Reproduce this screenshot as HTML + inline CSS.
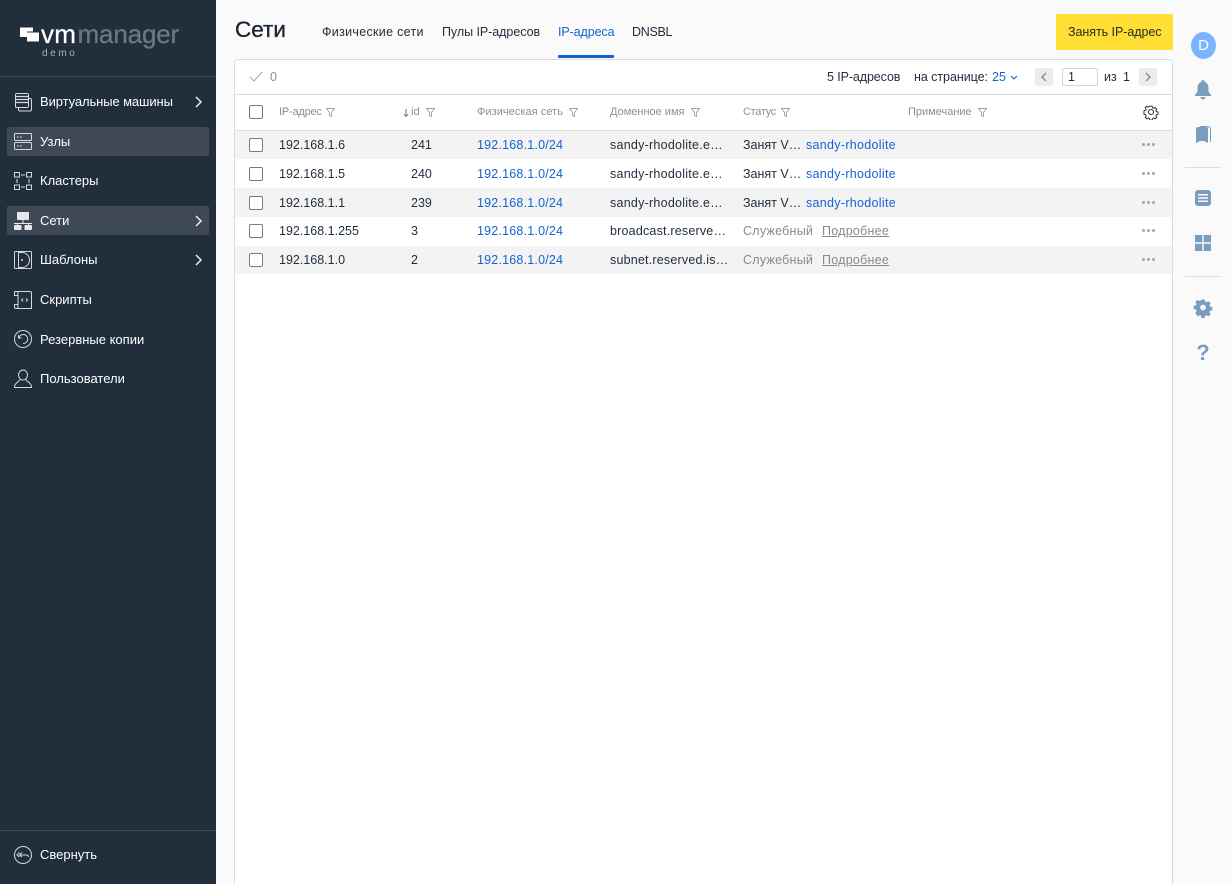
<!DOCTYPE html>
<html lang="ru"><head><meta charset="utf-8"><title>Сети</title>
<style>
*{box-sizing:border-box}
html,body{margin:0;padding:0;width:1232px;height:884px;overflow:hidden;background:#fafafa;font-family:"Liberation Sans",sans-serif;font-size:12.5px;color:#1f2d3d}
#wrap{position:absolute;left:0;top:0;width:1232px;height:884px;overflow:hidden}
.a,.t{position:absolute;white-space:nowrap}
.t{line-height:16px;height:16px}
.s{letter-spacing:.2px}
#side{position:absolute;left:0;top:0;width:216px;height:884px;background:#212e3c}
.hl{position:absolute;left:7px;width:202px;height:29px;background:#3e4955;border-radius:2px}
.m{position:absolute;left:40px;color:#fff;font-size:13px;line-height:16px;white-space:nowrap}
.ic{position:absolute;left:13px;width:20px;height:20px;fill:none;stroke:#d5d8dc;stroke-width:1}
.ch{position:absolute;left:194px;width:9px;height:14px;fill:none;stroke:#e8eaec;stroke-width:1.5}
.b{position:absolute;left:235px;width:937px;height:1px;background:#dcdcdc}
.row{position:absolute;left:235px;width:937px;height:29px}
.g{background:#f3f3f3}
.cb{position:absolute;left:249px;width:14px;height:14px;border:1px solid #7b7b7b;border-radius:2px;background:#fff}
.h{color:#8a8f95;font-size:11px}
.l{color:#1563d3}
.f{position:absolute;width:9px;height:9px;fill:none;stroke:#9aa0a6;stroke-width:.9}
.d{position:absolute;left:1142px;width:14px;height:3px}
.d i{position:absolute;top:0;width:3px;height:3px;background:#a6a6a6;border-radius:50%}
.r{position:absolute;left:1193px;width:20px;height:20px;fill:#7b9dbd}
</style></head><body><div id="wrap">
<div id="side">
<svg class="a" style="left:19px;top:26px" width="22" height="17"><path d="M1 1.500h13v4H8v5.500H1z" fill="#fff"/><rect x="8" y="6.500" width="12" height="9" fill="#fff"/></svg>
<div class="a" style="left:41px;top:19px;font-size:26px;line-height:30px;color:#fff;-webkit-text-stroke:.3px #fff;letter-spacing:.2px">vm</div>
<div class="a" style="left:77.500px;top:19px;font-size:26px;line-height:30px;color:#6e7781;-webkit-text-stroke:.3px #6e7781;letter-spacing:-.15px">manager</div>
<div class="a" style="left:42px;top:47px;font-size:10px;line-height:13px;color:#a9aeb4;letter-spacing:2.6px">demo</div>
<div class="a" style="left:0;top:76px;width:216px;height:1px;background:#3e4955"></div>
<div class="hl" style="top:127px"></div><div class="hl" style="top:206px"></div>

<svg class="ic" style="top:92px" viewBox="0 0 20 20"><path d="M2.500 15.500V3A1.500 1.500 0 0 1 4 1.500h10A1.500 1.500 0 0 1 15.500 3v11a1.500 1.500 0 0 1-1.500 1.500H3.500a1 1 0 0 1-1-1"/><path d="M2.500 4.500h13M2.500 7.500h13M2.500 10.500h13" stroke-width="1.300"/><path d="M15.500 6.500H17A1.500 1.500 0 0 1 18.500 8v9.500A1.500 1.500 0 0 1 17 19H7a1.500 1.500 0 0 1-1.500-1.500v-2"/></svg>
<div class="m" style="top:94px;letter-spacing:-.1px">Виртуальные машины</div>
<svg class="ch" style="top:95px" viewBox="0 0 9 14"><path d="M2 2l5 5-5 5"/></svg>

<svg class="ic" style="top:132px" viewBox="0 0 20 20"><rect x="1.500" y="1.500" width="17" height="7" rx="1"/><rect x="1.500" y="10.500" width="17" height="7" rx="1"/><path d="M4 5h1.500M7 5h1.500M4 14h1.500M7 14h1.500" stroke-width="1.200"/></svg>
<div class="m" style="top:134px">Узлы</div>

<svg class="ic" style="top:171px" viewBox="0 0 20 20"><rect x="1.500" y="1.500" width="5" height="4.500"/><rect x="13.500" y="1.500" width="5" height="4.500"/><rect x="1.500" y="14" width="5" height="4.500"/><rect x="13.500" y="14" width="5" height="4.500"/><path d="M8 4h4M8 16h4M4 8v4M16 8v4"/></svg>
<div class="m" style="top:173px">Кластеры</div>

<svg class="ic" style="top:211px" viewBox="0 0 20 20"><rect x="4" y="1" width="12" height="8" rx="1" fill="#e6e8ea" stroke="none"/><rect x="1" y="14" width="7.500" height="5" rx="1" fill="#e6e8ea" stroke="none"/><rect x="11.500" y="14" width="7.500" height="5" rx="1" fill="#e6e8ea" stroke="none"/><path d="M10 9v3M1 12.500h18M4.500 12.500V14M15.500 12.500V14" stroke="#e6e8ea"/></svg>
<div class="m" style="top:213px">Сети</div>
<svg class="ch" style="top:214px" viewBox="0 0 9 14"><path d="M2 2l5 5-5 5"/></svg>

<svg class="ic" style="top:250px" viewBox="0 0 20 20"><rect x="1.500" y="1.500" width="17" height="17" rx="1"/><path d="M5.500 1.500v17M5.500 2.500h3.500a7.500 7.500 0 0 1 0 15H5.500"/><circle cx="9" cy="10" r="1" fill="#d5d8dc" stroke="none"/></svg>
<div class="m" style="top:252px">Шаблоны</div>
<svg class="ch" style="top:253px" viewBox="0 0 9 14"><path d="M2 2l5 5-5 5"/></svg>

<svg class="ic" style="top:290px" viewBox="0 0 20 20"><path d="M1.500 1.500H17A1.500 1.500 0 0 1 18.500 3v15.500H5V5.500M1.500 1.500v4H5M1.500 1.500h2A1.500 1.500 0 0 1 5 3v2.500M5 14.500H1.500V17A1.500 1.500 0 0 0 3 18.500h2"/><path d="M10 8.500L8.500 10l1.500 1.500M13 8.500l1.500 1.500-1.500 1.500"/></svg>
<div class="m" style="top:292px">Скрипты</div>

<svg class="ic" style="top:329px" viewBox="0 0 20 20"><circle cx="10" cy="10" r="8.500"/><path d="M6 8.500A4.500 4.500 0 1 1 10 14.500M5.500 6v3h3"/></svg>
<div class="m" style="top:332px">Резервные копии</div>

<svg class="ic" style="top:369px" viewBox="0 0 20 20"><ellipse cx="10" cy="6" rx="4.500" ry="5"/><path d="M7 10.500c0 2-5.500 3-5.500 7.500v.5h17V18c0-4.500-5.500-5.500-5.500-7.500"/></svg>
<div class="m" style="top:371px">Пользователи</div>

<div class="a" style="left:0;top:830px;width:216px;height:1px;background:#3e4955"></div>
<svg class="ic" style="top:845px" viewBox="0 0 20 20"><circle cx="10" cy="10" r="8.500"/><path d="M6.500 7.500L4 10l2.500 2M9 7.500L6.500 10 9 12M7 10h6c1.500 0 2.500 .8 2.500 2"/></svg>
<div class="m" style="top:847px">Свернуть</div>
</div>

<div class="t" style="left:235px;top:17px;font-size:22.500px;line-height:26px;height:26px;color:#1b2632;-webkit-text-stroke:.35px #1b2632">Сети</div>
<div class="t" style="left:322px;top:24px;letter-spacing:.3px">Физические сети</div>
<div class="t" style="left:442px;top:24px;letter-spacing:-.05px">Пулы IP-адресов</div>
<div class="t l" style="left:558px;top:24px;letter-spacing:-.1px">IP-адреса</div>
<div class="t" style="left:632px;top:24px;letter-spacing:-.3px">DNSBL</div>
<div class="a" style="left:558px;top:55px;width:56px;height:3px;background:#0f62d0;border-radius:1px"></div>

<div class="a" style="left:1056px;top:14px;width:117px;height:36px;background:#ffdf36;border-radius:2px"></div>
<div class="t" style="left:1068px;top:24px;color:#2a2a20;letter-spacing:-.05px">Занять IP-адрес</div>

<div class="a" style="left:234px;top:59px;width:939px;height:825px;background:#fff;border:1px solid #dcdcdc;border-bottom:0;border-radius:4px 4px 0 0"></div>
<svg class="a" style="left:249px;top:71px" width="14" height="12"><path d="M1 6l4 4 8-9" fill="none" stroke="#a6a6a6"/></svg>
<div class="t" style="left:270px;top:69px;color:#8a8f95">0</div>
<div class="t" style="left:827px;top:69px;letter-spacing:-.1px">5 IP-адресов</div>
<div class="t" style="left:914px;top:69px;letter-spacing:-.05px">на странице:</div>
<div class="t l" style="left:992px;top:69px">25</div>
<svg class="a" style="left:1010px;top:75px" width="8" height="6"><path d="M1 1l3 3 3-3" fill="none" stroke="#1563d3"/></svg>
<div class="a" style="left:1035px;top:68px;width:18px;height:18px;background:#ececec;border-radius:2px"></div>
<svg class="a" style="left:1040px;top:72px" width="8" height="10"><path d="M6 1L2 5l4 4" fill="none" stroke="#8f8f8f" stroke-width="1.500"/></svg>
<div class="a" style="left:1062px;top:68px;width:36px;height:18px;background:#fff;border:1px solid #d4d4d4;border-radius:2px"></div>
<div class="t" style="left:1068px;top:69px">1</div>
<div class="t" style="left:1104px;top:69px">из</div>
<div class="t" style="left:1123px;top:69px">1</div>
<div class="a" style="left:1139px;top:68px;width:18px;height:18px;background:#ececec;border-radius:2px"></div>
<svg class="a" style="left:1144px;top:72px" width="8" height="10"><path d="M2 1l4 4-4 4" fill="none" stroke="#8f8f8f" stroke-width="1.500"/></svg>
<div class="b" style="top:94px"></div>

<div class="cb" style="top:105px"></div>
<div class="t h" style="left:279px;top:104px;letter-spacing:-.2px">IP-адрес</div>
<svg class="f" style="left:326px;top:108px" viewBox="0 0 9 9"><path d="M.5 .5h8L5.500 4.500V8.500L3.500 7.500V4.500z"/></svg>
<svg class="a" style="left:403px;top:108px" width="6" height="10"><path d="M3 1v7M1 6l2 2.500L5 6" fill="none" stroke="#777"/></svg>
<div class="t h" style="left:411px;top:104px">id</div>
<svg class="f" style="left:426px;top:108px" viewBox="0 0 9 9"><path d="M.5 .5h8L5.500 4.500V8.500L3.500 7.500V4.500z"/></svg>
<div class="t h" style="left:477px;top:104px;letter-spacing:.05px">Физическая сеть</div>
<svg class="f" style="left:569px;top:108px" viewBox="0 0 9 9"><path d="M.5 .5h8L5.500 4.500V8.500L3.500 7.500V4.500z"/></svg>
<div class="t h" style="left:610px;top:104px">Доменное имя</div>
<svg class="f" style="left:691px;top:108px" viewBox="0 0 9 9"><path d="M.5 .5h8L5.500 4.500V8.500L3.500 7.500V4.500z"/></svg>
<div class="t h" style="left:743px;top:104px;letter-spacing:-.3px">Статус</div>
<svg class="f" style="left:781px;top:108px" viewBox="0 0 9 9"><path d="M.5 .5h8L5.500 4.500V8.500L3.500 7.500V4.500z"/></svg>
<div class="t h" style="left:908px;top:104px">Примечание</div>
<svg class="f" style="left:978px;top:108px" viewBox="0 0 9 9"><path d="M.5 .5h8L5.500 4.500V8.500L3.500 7.500V4.500z"/></svg>
<svg class="a" style="left:1143px;top:104px" width="16" height="16" viewBox="0 0 16 16"><circle cx="8" cy="8" r="2.500" fill="none" stroke="#333" stroke-width="1.100"/><path d="M6.700 1.500h2.600l.4 1.800 1.300.6 1.600-1 1.800 1.900-1 1.500.6 1.300 1.800.4v2.600l-1.800.4-.6 1.300 1 1.500-1.800 1.800-1.600-1-1.300.6-.4 1.800H6.700l-.4-1.800-1.300-.6-1.600 1-1.800-1.800 1-1.500-.6-1.300-1.800-.4V6.600l1.800-.4.6-1.300-1-1.500 1.800-1.900 1.600 1 1.300-.6z" transform="translate(.8 .8) scale(.9)" fill="none" stroke="#333" stroke-width="1.100"/></svg>
<div class="b" style="top:130px"></div>

<div class="row g" style="top:131px;height:28px"></div>
<div class="row g" style="top:188px"></div>
<div class="row g" style="top:246px;height:28px"></div>

<div class="cb" style="top:138px"></div><div class="cb" style="top:167px"></div><div class="cb" style="top:196px"></div><div class="cb" style="top:224px"></div><div class="cb" style="top:253px"></div>

<div class="t" style="left:279px;top:137px">192.168.1.6</div><div class="t" style="left:411px;top:137px">241</div><div class="t l s" style="left:477px;top:137px">192.168.1.0/24</div><div class="t s" style="left:610px;top:137px;letter-spacing:.25px">sandy-rhodolite.e…</div><div class="t" style="left:743px;top:137px">Занят V…</div><div class="t l" style="left:806px;top:137px;width:89px;overflow:hidden;letter-spacing:.3px">sandy-rhodolite</div>
<div class="t" style="left:279px;top:166px">192.168.1.5</div><div class="t" style="left:411px;top:166px">240</div><div class="t l s" style="left:477px;top:166px">192.168.1.0/24</div><div class="t s" style="left:610px;top:166px;letter-spacing:.25px">sandy-rhodolite.e…</div><div class="t" style="left:743px;top:166px">Занят V…</div><div class="t l" style="left:806px;top:166px;width:89px;overflow:hidden;letter-spacing:.3px">sandy-rhodolite</div>
<div class="t" style="left:279px;top:195px">192.168.1.1</div><div class="t" style="left:411px;top:195px">239</div><div class="t l s" style="left:477px;top:195px">192.168.1.0/24</div><div class="t s" style="left:610px;top:195px;letter-spacing:.25px">sandy-rhodolite.e…</div><div class="t" style="left:743px;top:195px">Занят V…</div><div class="t l" style="left:806px;top:195px;width:89px;overflow:hidden;letter-spacing:.3px">sandy-rhodolite</div>
<div class="t" style="left:279px;top:223px">192.168.1.255</div><div class="t" style="left:411px;top:223px">3</div><div class="t l s" style="left:477px;top:223px">192.168.1.0/24</div><div class="t s" style="left:610px;top:223px">broadcast.reserve…</div><div class="t" style="left:743px;top:223px;color:#858a8f;letter-spacing:.25px">Служебный</div><div class="t" style="left:822px;top:223px;color:#858a8f;text-decoration:underline;letter-spacing:.25px">Подробнее</div>
<div class="t" style="left:279px;top:252px">192.168.1.0</div><div class="t" style="left:411px;top:252px">2</div><div class="t l s" style="left:477px;top:252px">192.168.1.0/24</div><div class="t s" style="left:610px;top:252px">subnet.reserved.is…</div><div class="t" style="left:743px;top:252px;color:#858a8f;letter-spacing:.25px">Служебный</div><div class="t" style="left:822px;top:252px;color:#858a8f;text-decoration:underline;letter-spacing:.25px">Подробнее</div>

<div class="d" style="top:143px"><i style="left:0"></i><i style="left:5px"></i><i style="left:10px"></i></div>
<div class="d" style="top:172px"><i style="left:0"></i><i style="left:5px"></i><i style="left:10px"></i></div>
<div class="d" style="top:201px"><i style="left:0"></i><i style="left:5px"></i><i style="left:10px"></i></div>
<div class="d" style="top:229px"><i style="left:0"></i><i style="left:5px"></i><i style="left:10px"></i></div>
<div class="d" style="top:258px"><i style="left:0"></i><i style="left:5px"></i><i style="left:10px"></i></div>

<div class="a" style="left:1191px;top:32px;width:25px;height:27px;border-radius:50%;background:#78b4ff;color:#fff;text-align:center;font-size:15px;line-height:27px">D</div>
<svg class="r" style="top:80px" viewBox="0 0 20 20"><path d="M10 0a1.500 1.500 0 0 1 1.500 1.700C14 2.500 15.500 5 15.500 8v3.500L18 15v1H2v-1l2.500-3.500V8C4.500 5 6 2.500 8.500 1.700A1.500 1.500 0 0 1 10 0zM7.500 17h5a2.500 2.500 0 0 1-5 0z"/></svg>
<svg class="r" style="top:125px" viewBox="0 0 20 20"><path d="M3 4a2 2 0 0 1 2-2h8a2 2 0 0 1 2 2v14l-4-2H7l-4 2z"/><path d="M7 1.500h8A2.500 2.500 0 0 1 17.500 4v13" fill="none" stroke="#7b9dbd"/></svg>
<div class="a" style="left:1185px;top:167px;width:36px;height:1px;background:#dcdcdc"></div>
<svg class="r" style="top:188px" viewBox="0 0 20 20"><path fill-rule="evenodd" d="M5 2h10a3 3 0 0 1 3 3v10a3 3 0 0 1-3 3H5a3 3 0 0 1-3-3V5a3 3 0 0 1 3-3zM5 6v1.500h10V6zM5 9.200v1.500h10V9.200zM5 12.500V14h10v-1.500z"/></svg>
<svg class="r" style="top:233px" viewBox="0 0 20 20"><path d="M2 2h7.300v7.300H2zM10.700 2H18v7.300h-7.300zM2 10.700h7.300V18H2zM10.700 10.700H18V18h-7.300z"/></svg>
<div class="a" style="left:1185px;top:276px;width:36px;height:1px;background:#dcdcdc"></div>
<svg class="r" style="top:298px" viewBox="0 0 20 20"><path fill-rule="evenodd" d="M8.300 1h3.400l.5 2.400 1.500.6 2-1.300 2.400 2.400-1.300 2 .6 1.500 2.400.5v3.400l-2.400.5-.6 1.500 1.300 2-2.400 2.400-2-1.300-1.500.6-.5 2.400H8.300l-.5-2.400-1.500-.6-2 1.300L1.900 15.100l1.300-2-.6-1.500L.2 11.100V7.700l2.400-.5.6-1.500-1.300-2L4.300 1.300l2 1.300 1.500-.6zM10 6.500a3 3 0 1 0 0 6 3 3 0 0 0 0-6z" transform="translate(.5 .5) scale(.95)"/></svg>
<div class="a" style="left:1193px;top:340px;width:20px;text-align:center;font-size:22px;line-height:26px;font-weight:700;color:#7b9dbd">?</div>
</div></body></html>
